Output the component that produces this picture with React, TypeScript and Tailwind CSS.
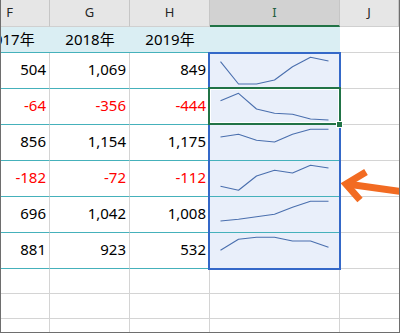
import React from "react";

type Row = { f: number; g: number; h: number; spark: number[] };

// y positions (px, inside the 35px cell) read off the sparklines
const rows: Row[] = [
  { f: 504, g: 1069, h: 849, spark: [8.7, 31, 31, 27, 13.7, 4.3, 8] },
  { f: -64, g: -356, h: -444, spark: [11.7, 4.3, 20, 24.3, 25.3, 30, 31] },
  { f: 856, g: 1154, h: 1175, spark: [12, 9.3, 15.3, 17, 9.3, 4.3, 4.3] },
  { f: -182, g: -72, h: -112, spark: [25.3, 29.3, 15, 9.3, 12, 4.3, 7] },
  { f: 696, g: 1042, h: 1008, spark: [24, 22.3, 19.7, 17.3, 10.3, 4.3, 4.3] },
  { f: 881, g: 923, h: 532, spark: [17.3, 6.3, 4.3, 4.3, 8, 8, 14.3] },
];

const fmt = (n: number) => n.toLocaleString("en-US");

function Num({ value }: { value: number }) {
  return (
    <div
      className={`flex h-full w-[80px] shrink-0 items-center justify-end border-r border-b border-r-[#d4d4d4] border-b-[#45b1bb] pr-[3px] pb-[3px] ${
        value < 0 ? "text-[#ff0000]" : "text-black"
      }`}
    >
      {fmt(value)}
    </div>
  );
}

function Sparkline({ ys }: { ys: number[] }) {
  const pts = ys.map((y, i) => `${10.5 + i * 18},${y}`).join(" ");
  return (
    <svg width="129" height="35" viewBox="0 0 129 35" className="block">
      <polyline points={pts} fill="none" stroke="#4a6fae" strokeWidth="1.1" strokeLinejoin="round" />
    </svg>
  );
}

function HeaderCell({ label, w, selected }: { label: string; w: string; selected?: boolean }) {
  return (
    <div
      className={`flex h-full shrink-0 items-center justify-center border-r border-r-[#c6c6c6] text-[13px] ${w} ${
        selected
          ? "border-b-2 border-b-[#217346] bg-[#d2d2d2] text-[#1f5e42]"
          : "border-b border-b-[#d0d0d0] bg-[#e6e6e6] text-[#262626]"
      }`}
    >
      {label}
    </div>
  );
}

function Blank() {
  return (
    <div className="flex h-[25px] border-b border-b-[#d4d4d4]">
      <div className="w-[80px] shrink-0 border-r border-r-[#d4d4d4]" />
      <div className="w-[80px] shrink-0 border-r border-r-[#d4d4d4]" />
      <div className="w-[80px] shrink-0 border-r border-r-[#d4d4d4]" />
      <div className="w-[130px] shrink-0 border-r border-r-[#d4d4d4]" />
      <div className="w-[59px] shrink-0" />
    </div>
  );
}

export default function App() {
  return (
    <div
      className="relative h-[333px] w-[400px] overflow-hidden border-x border-b border-[#6e6e6e] bg-white text-[15px]"
      style={{ fontFamily: '"Noto Sans", "Noto Sans CJK JP", sans-serif' }}
    >
      <div className="ml-[-31px]">
        {/* column letters */}
        <div className="flex h-[27px]">
          <HeaderCell label="F" w="w-[80px]" />
          <HeaderCell label="G" w="w-[80px]" />
          <HeaderCell label="H" w="w-[80px]" />
          <HeaderCell label="I" w="w-[130px]" selected />
          <HeaderCell label="J" w="w-[59px]" />
        </div>

        {/* year labels */}
        <div className="flex h-[26px]">
          <div className="flex w-[370px] shrink-0 border-b border-b-[#45b1bb] bg-[#daeef3] text-black">
            <div className="flex w-[80px] items-center justify-center">2017年</div>
            <div className="flex w-[80px] items-center justify-center">2018年</div>
            <div className="flex w-[80px] items-center justify-center">2019年</div>
            <div className="w-[130px]" />
          </div>
          <div className="w-[59px] shrink-0 border-b border-b-[#d4d4d4]" />
        </div>

        {rows.map((r, i) => (
          <div key={i} className="flex h-[36px]">
            <Num value={r.f} />
            <Num value={r.g} />
            <Num value={r.h} />
            <div className="h-full w-[130px] shrink-0 border-r border-b border-r-[#d4d4d4] border-b-[#45b1bb] bg-[#e9effa]">
              <Sparkline ys={r.spark} />
            </div>
            <div className="h-full w-[59px] shrink-0 border-b border-b-[#d4d4d4]" />
          </div>
        ))}

        <Blank />
        <Blank />
        <div className="flex h-[20px]">
          <div className="w-[80px] shrink-0 border-r border-r-[#d4d4d4]" />
          <div className="w-[80px] shrink-0 border-r border-r-[#d4d4d4]" />
          <div className="w-[80px] shrink-0 border-r border-r-[#d4d4d4]" />
          <div className="w-[130px] shrink-0 border-r border-r-[#d4d4d4]" />
        </div>
      </div>

      {/* sparkline group selection */}
      <div className="pointer-events-none absolute left-[207px] top-[52px] h-[218px] w-[133px] border-2 border-[#3468c8]" />
      {/* active cell */}
      <div className="pointer-events-none absolute left-[207px] top-[87px] h-[38px] w-[133px] border-2 border-[#217346] shadow-[inset_0_0_0_1px_#ffffff]" />
      <div className="pointer-events-none absolute left-[335px] top-[121px] h-[7px] w-[7px] border border-white bg-[#217346]" />

      {/* callout arrow */}
      <svg className="pointer-events-none absolute left-[334px] top-[160px]" width="66" height="50" viewBox="0 0 66 50">
        <polyline points="31,12 11,24 25,40" fill="none" stroke="#f26b22" strokeWidth="7" strokeLinejoin="miter" />
        <line x1="12" y1="24" x2="66" y2="31.5" stroke="#f26b22" strokeWidth="7" />
      </svg>
    </div>
  );
}
